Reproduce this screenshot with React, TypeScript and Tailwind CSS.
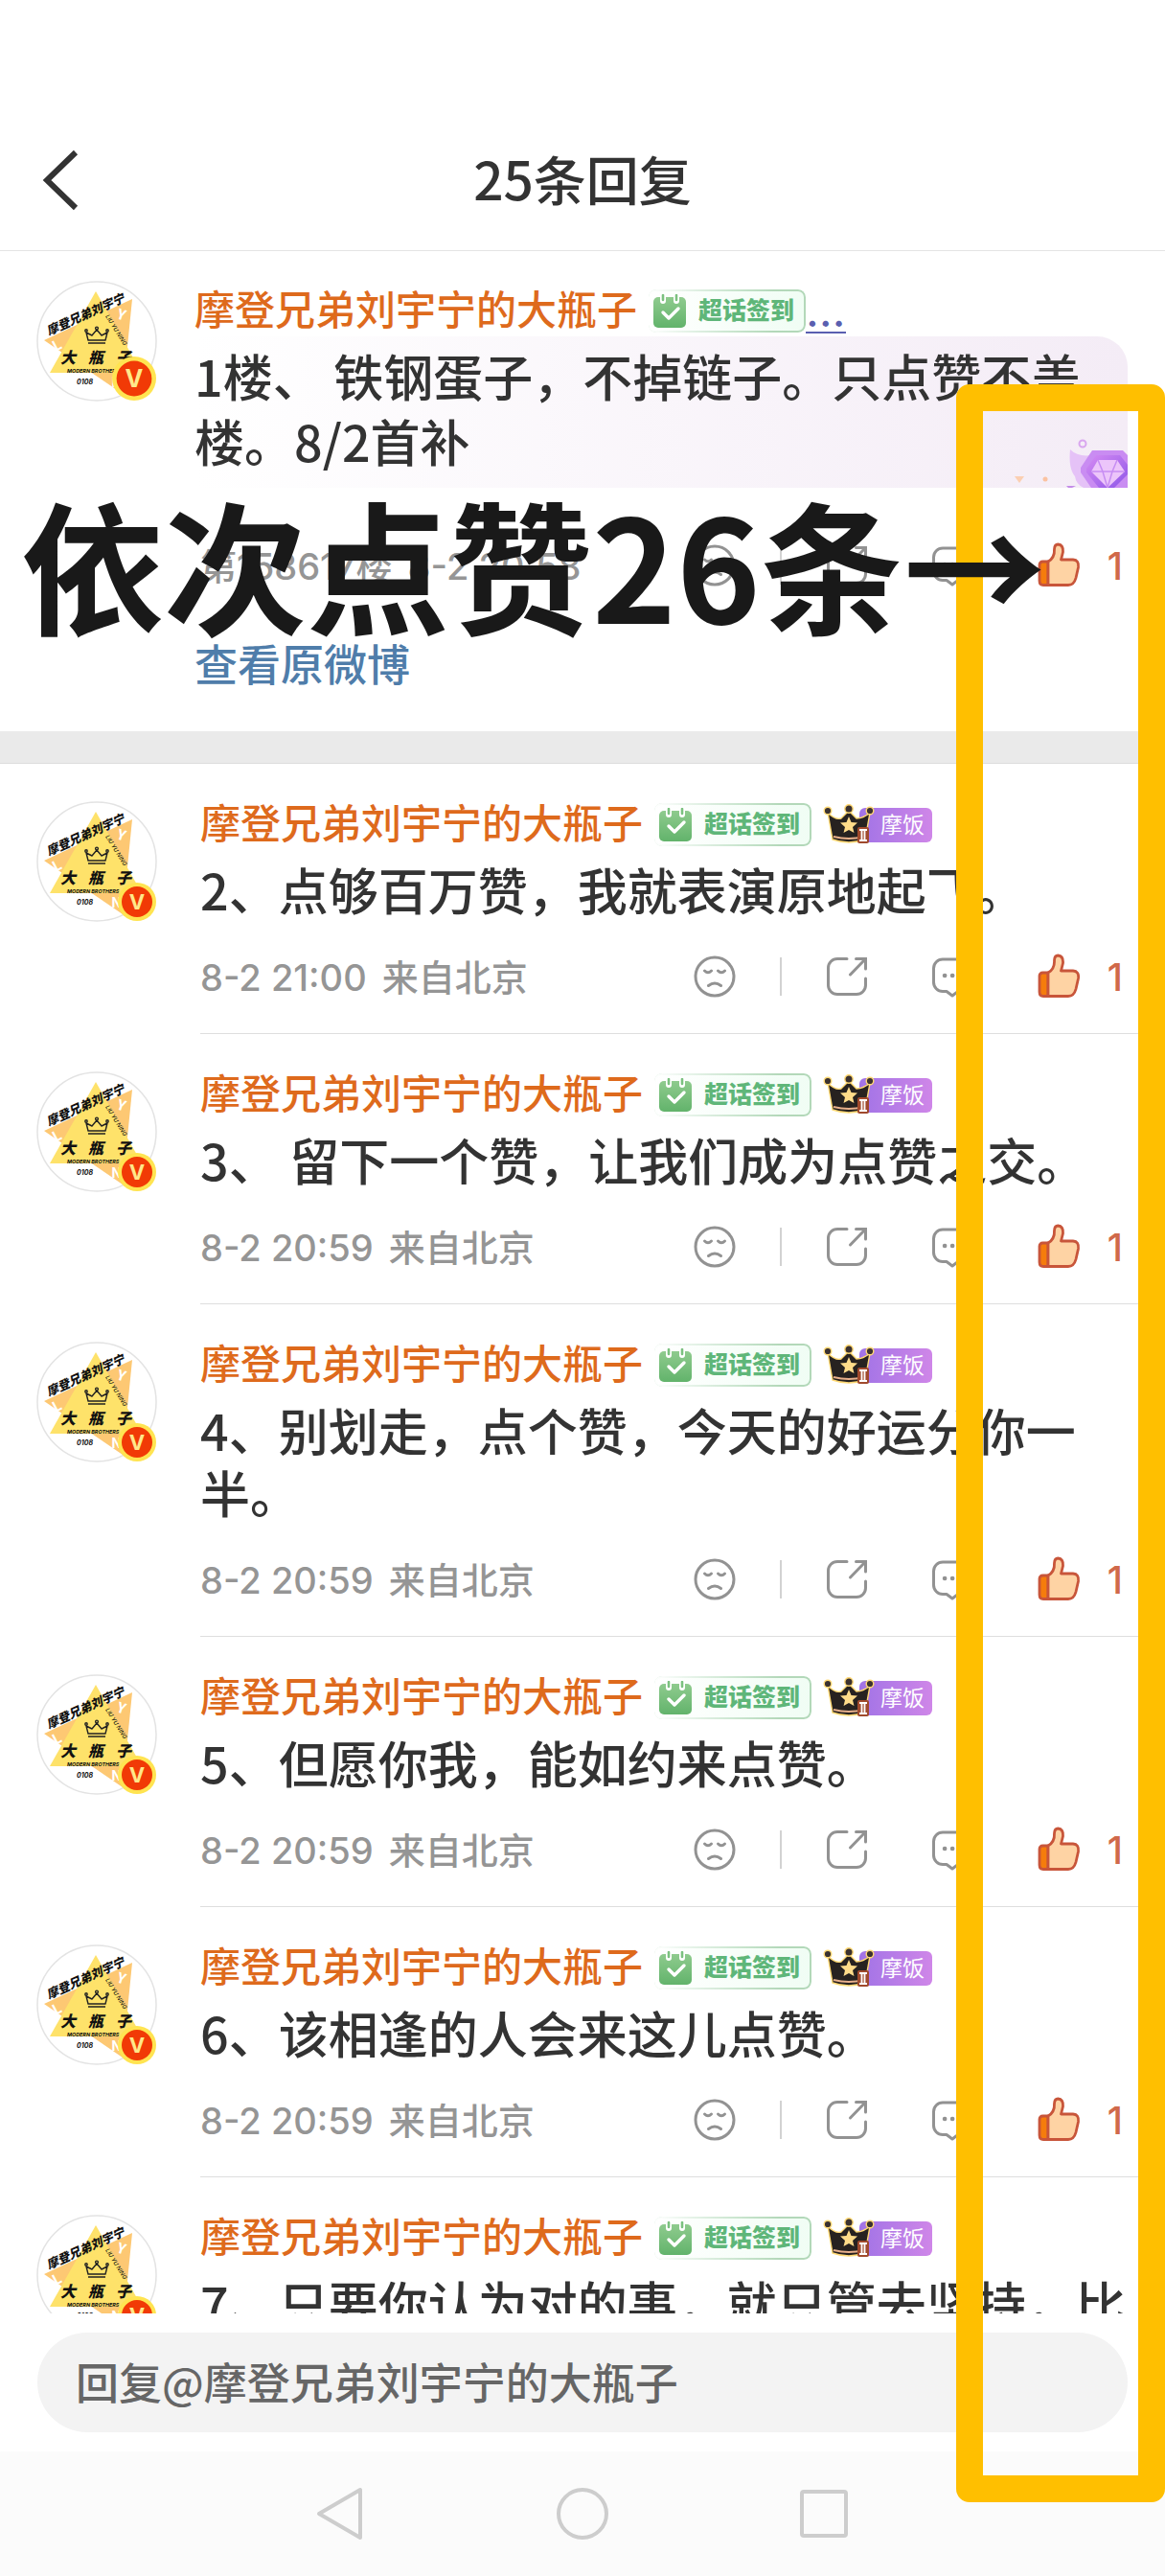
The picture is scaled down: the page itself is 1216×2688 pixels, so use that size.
import React from 'react';

interface Reply {
  id: number;
  text: string;
  time: string;
  location: string;
  likes: number;
}

const USER_NAME = '摩登兄弟刘宇宁的大瓶子';

const replies: Reply[] = [
  { id: 2, text: '2、点够百万赞，我就表演原地起飞。', time: '8-2 21:00', location: '来自北京', likes: 1 },
  { id: 3, text: '3、 留下一个赞，让我们成为点赞之交。', time: '8-2 20:59', location: '来自北京', likes: 1 },
  { id: 4, text: '4、别划走，点个赞，今天的好运分你一半。', time: '8-2 20:59', location: '来自北京', likes: 1 },
  { id: 5, text: '5、但愿你我，能如约来点赞。', time: '8-2 20:59', location: '来自北京', likes: 1 },
  { id: 6, text: '6、该相逢的人会来这儿点赞。', time: '8-2 20:59', location: '来自北京', likes: 1 },
  { id: 7, text: '7、只要你认为对的事，就只管去坚持，比', time: '8-2 20:59', location: '来自北京', likes: 1 },
];

const Avatar = ({ large = false }: { large?: boolean }) => (
  <svg viewBox="0 0 126 126" className="size-[126px] shrink-0 overflow-visible" role="img" aria-label={USER_NAME}>
    <circle cx="63" cy="63" r="62" fill="#fff" stroke="#e3e3e3" strokeWidth="1.5" />
    <path d="M8 62 100 19 90 118Z" fill="#fdc873" />
    <path d="M62 11 110 96H14Z" fill="#fee26a" />
    <g fill="#fff" fontSize="15" fontWeight="700">
      <text transform="translate(20 74) rotate(-28)">L</text>
      <text transform="translate(83 39) rotate(18)">Y</text>
      <text x="78" y="111">N</text>
    </g>
    <g fill="#111" fontWeight="900">
      <text transform="translate(13 57) rotate(-24)" fontSize="12.5" fontStyle="italic">摩登兄弟刘宇宁</text>
      <g fontSize="16" fontStyle="italic">
        <text x="25" y="86">大</text>
        <text x="54" y="86">瓶</text>
        <text x="83" y="86">子</text>
      </g>
      <g fontFamily="Inter, sans-serif" fontStyle="italic" fontWeight="700">
        <text x="32" y="96" fontSize="5.4">MODERN BROTHERS</text>
        <text x="42" y="108" fontSize="7">0108</text>
        <text transform="translate(72 37) rotate(58)" fontSize="6" fontWeight="500">LIU YU NING</text>
      </g>
    </g>
    <g fill="none" stroke="#222" strokeWidth="1.4" strokeLinejoin="round">
      <path d="M54 62 52 54 58 57 63 51 68 57 74 54 72 62ZM54 65H72" />
      <circle cx="52" cy="52" r="1.2" />
      <circle cx="63" cy="49.5" r="1.4" />
      <circle cx="74" cy="52" r="1.2" />
    </g>
    <g transform={large ? 'translate(102 102) scale(1.15)' : 'translate(105 105)'}>
      <circle r="20" fill="#ffe451" />
      <circle r="16" fill="#f13a06" />
      <text y="8" textAnchor="middle" fontSize="22" fontWeight="700" fontFamily="Inter, sans-serif" fill="#ffe88a">V</text>
    </g>
  </svg>
);

const CheckInBadge = () => (
  <span className="relative flex h-[45px] items-center gap-3 rounded-lg bg-linear-to-r from-white to-green-50 pr-3 pl-1">
    <span className="absolute inset-0 rounded-lg border-2 border-[#b3d8b9] mask-l-from-20% mask-l-to-100%" />
    <svg viewBox="0 0 36 36" className="size-9" aria-hidden="true">
      <defs>
        <linearGradient id="cal" x1="0" y1="0" x2="0" y2="1">
          <stop offset="0" stopColor="#8fcb8e" />
          <stop offset="1" stopColor="#62b36b" />
        </linearGradient>
      </defs>
      <rect x="1" y="3" width="34" height="32" rx="5" fill="url(#cal)" />
      <path d="M11 1V7M25 1V7" stroke="#fff" strokeWidth="6" strokeLinecap="round" />
      <path d="M11 1V6M25 1V6" stroke="#7cc180" strokeWidth="2.6" strokeLinecap="round" />
      <path d="M11 19 17 25 27 15" fill="none" stroke="#fff" strokeWidth="3.4" strokeLinecap="round" strokeLinejoin="round" />
    </svg>
    <span className="pb-1 text-[25px] leading-none font-black text-[#5fb679]">超话签到</span>
  </span>
);

const FanBadge = () => (
  <span className="flex h-[45px] items-center">
    <svg viewBox="0 0 54 46" className="z-10 h-[46px] w-[54px] shrink-0" aria-hidden="true">
      <g stroke="#ffd873" strokeWidth="1.4">
        <path d="M5 10 Q13 18 19 16 L27 8 35 16 Q42 16 49 10 L44 38 Q27 44 10 38Z" fill="#272220" />
        <circle cx="5" cy="8" r="3.8" fill="#3b3230" />
        <circle cx="27" cy="6" r="4.2" fill="#3b3230" />
        <circle cx="49" cy="8" r="3.8" fill="#3b3230" />
      </g>
      <path d="M11 35 Q27 39 43 35" fill="none" stroke="#e9b08b" strokeWidth="2" />
      <path d="M27 14 29.500 20 36 20.500 31 25 32.500 31 27 28 21.500 31 23 25 18 20.500 24.500 20Z" fill="#ffdc8a" />
      <rect x="36" y="25" width="12" height="17" rx="2" fill="#a04a2d" />
      <path d="M38 28H46M38 39H46M40.500 28V39M43.500 28V39" stroke="#fff" strokeWidth="1.8" />
    </svg>
    <span className="-ml-4 flex h-9 items-center rounded-md bg-linear-to-r from-[#a173e6] to-[#cf86e8] pr-2 pb-0.5 pl-[22px] text-[23px] leading-none text-white">摩饭</span>
  </span>
);

const SadIcon = () => (
  <svg viewBox="0 0 44 44" className="size-11" fill="none" stroke="#929292" strokeWidth="3" strokeLinecap="round">
    <circle cx="22" cy="22" r="20" />
    <path d="M11.500 16Q15 19.500 18.500 16M25.500 16Q29 19.500 32.500 16M15.500 31.500Q22 26.500 28.500 31.500" />
  </svg>
);

const ShareIcon = () => (
  <svg viewBox="0 0 44 44" className="size-11" fill="none" stroke="#929292" strokeWidth="3" strokeLinecap="round">
    <path d="M22 3.500H12A9.500 9.500 0 0 0 2.500 13V31A9.500 9.500 0 0 0 12 40.500H32A9.500 9.500 0 0 0 41.500 31V24" />
    <path d="M31.500 3.500H41.500V14M41 4 25.500 20" />
  </svg>
);

const CommentIcon = () => (
  <svg viewBox="0 0 44 44" className="size-11" fill="none" stroke="#929292" strokeWidth="3" strokeLinecap="round" strokeLinejoin="round">
    <path d="M12 4H32A9.500 9.500 0 0 1 41.500 13.500V28A9.500 9.500 0 0 1 32 37.500H28L22 42 16 37.500H12A9.500 9.500 0 0 1 2.500 28V13.500A9.500 9.500 0 0 1 12 4Z" />
    <path d="M14 21H14.200M22 21H22.200M30 21H30.200" strokeWidth="4.500" />
  </svg>
);

const LikeIcon = () => (
  <svg viewBox="0 0 46 48" className="h-12 w-[46px]" stroke="#c8553a" strokeWidth="2.800" strokeLinejoin="round">
    <path d="M12 20H6.500Q3 20 3 23.500V40Q3 44.500 7 44.500H12Z" fill="#f57c0c" />
    <path d="M12 20Q19 16 18.500 7 18.800 2 22.300 2 28 2.500 27.500 10L25.500 18H38Q44.500 18.500 43.500 26L41 37Q39 44.500 33 44.500H12Z" fill="#fed3a4" />
  </svg>
);

const Actions = ({ likes }: { likes: number }) => (
  <div className="ml-auto flex shrink-0 items-center">
    <button aria-label="踩"><SadIcon /></button>
    <span className="mx-[46px] h-10 w-0.5 bg-[#d2d2d2]" />
    <button aria-label="转发" className="mr-[66px]"><ShareIcon /></button>
    <button aria-label="评论" className="mr-[66px]"><CommentIcon /></button>
    <button aria-label="点赞" className="flex items-center">
      <LikeIcon />
      <span className="w-11 pt-0.5 text-right font-[Inter] text-[39px] leading-[48px] font-medium text-[#d0694a]">{likes}</span>
    </button>
  </div>
);

const Gem = () => (
  <svg viewBox="0 0 130 52" className="absolute right-0 bottom-0 h-[52px] w-[130px]" aria-hidden="true">
    <defs>
      <linearGradient id="gem" x1="0" y1="0" x2="1" y2="1">
        <stop offset="0" stopColor="#d58bf3" />
        <stop offset="1" stopColor="#8f57e8" />
      </linearGradient>
    </defs>
    <path d="M12 40H22L17 47Z" fill="#fbcfb2" />
    <circle cx="44" cy="43" r="2.500" fill="#fbc3a2" />
    <circle cx="83" cy="6" r="3.500" fill="none" stroke="#d9a6ef" strokeWidth="2" />
    <path d="M70 12Q78 20 92 18V52H84Q76 48 75 40 68 32 70 12Z" fill="#e5c2f7" />
    <path d="M66 50H76L72 52H68Z" fill="#c48ce8" />
    <path d="M93 13H125L130 18V52H92L81 36V31Z" fill="#c98cf2" />
    <path d="M97 18H122L130 28V38L116 52H100L87 36V32Z" fill="url(#gem)" />
    <path d="M99 23H119L127 35 109 52 92 35Z" fill="#ecc5fa" />
    <path d="M99 23 104 35 109 52 114 35 119 23M92 35H127" fill="none" stroke="#c78df3" strokeWidth="1.500" />
  </svg>
);

const Meta = ({ items, likes }: { items: string[]; likes: number }) => (
  <div className="flex h-12 items-center pr-11">
    <p className="flex items-center gap-4 pt-px font-['Inter','Noto_Sans_CJK_SC',sans-serif] text-[38px] leading-[46px] font-medium whitespace-nowrap text-[#959595]">
      {items.map(item => <span key={item}>{item}</span>)}
    </p>
    <Actions likes={likes} />
  </div>
);

const ReplyRow = ({ reply }: { reply: Reply }) => (
  <li className="flex gap-[45px] pl-[38px]">
    <div className="pt-[39px]"><Avatar /></div>
    <div className="min-w-0 flex-1 border-b border-[#dedede] pt-[41px] pb-[35px]">
      <div className="flex h-[45px] items-center gap-3">
        <a href="#user" className="pb-2 text-[42px] leading-[45px] font-medium whitespace-nowrap text-[#de6a1c]">{USER_NAME}</a>
        <CheckInBadge />
        <FanBadge />
      </div>
      <p className="mt-3 mb-[35px] pr-8 text-[52px] leading-[65px] font-medium text-[#333]">{reply.text}</p>
      <Meta items={[reply.time, reply.location]} likes={reply.likes} />
    </div>
  </li>
);

const App: React.FC = () => (
  <div className="relative flex h-screen flex-col overflow-hidden bg-white font-['Noto_Sans_CJK_SC',sans-serif]">
    <header className="relative flex h-[262px] shrink-0 items-center justify-center border-b border-[#e4e4e4] pt-[114px]">
      <button aria-label="返回" className="absolute left-[43px]">
        <svg viewBox="0 0 42 64" className="h-16 w-[42px]" fill="none" stroke="#333" strokeWidth="6">
          <path d="M36 3 6 32 36 61" />
        </svg>
      </button>
      <h1 className="pb-1.5 text-[55px] leading-[68px] font-medium text-[#333]">25条回复</h1>
    </header>

    <main className="min-h-0 flex-1 overflow-hidden">
      <article className="flex gap-[39px] pb-[46px] pl-[38px]">
        <div className="pt-[31px]"><Avatar large /></div>
        <div className="min-w-0 flex-1 pt-10">
          <div className="flex h-[45px] items-center gap-3">
            <a href="#user" className="pb-2 text-[42px] leading-[45px] font-medium whitespace-nowrap text-[#de6a1c]">{USER_NAME}</a>
            <CheckInBadge />
            <a href="#more" className="-ml-3 border-b-2 border-[#5a5fb0] font-[Inter] text-[48px] leading-[44px] text-[#5a5fb0]">…</a>
          </div>
          <div className="relative mt-1 mr-[39px] rounded-tr-[32px] bg-linear-to-r from-white to-[#f4ecf6] pt-[7px] pb-[15px]">
            <Gem />
            <p className="relative text-[52px] leading-[68px] font-medium text-[#333]">1楼、 铁钢蛋子，不掉链子。只点赞不盖楼。8/2首补</p>
          </div>
          <div className="mt-[57px] pl-1.5">
            <Meta items={['第158617楼', '8-2 20:58']} likes={1} />
          </div>
          <a href="#weibo" className="mt-[54px] mb-px block text-[45px] leading-[48px] font-medium text-[#4f7daa]">查看原微博</a>
        </div>
      </article>

      <div className="h-[34px] border-b border-[#dcdcdc] bg-[#eaeaea]" />

      <ul>
        {replies.map(reply => <ReplyRow key={reply.id} reply={reply} />)}
      </ul>
    </main>

    <footer className="shrink-0 px-[39px] py-5">
      <input
        type="text"
        aria-label="回复"
        placeholder={`回复@${USER_NAME}`}
        className="block h-[104px] w-full rounded-full bg-[#f3f3f3] px-10 pb-1 text-[45px] font-medium text-[#333] placeholder:text-[#666]"
      />
    </footer>

    <nav className="flex h-[130px] shrink-0 items-center justify-center gap-[198px] bg-[#fbfbfb]">
      <button aria-label="后退">
        <svg viewBox="0 0 54 58" className="h-[58px] w-[54px]" fill="none" stroke="#cdcdcd" strokeWidth="4" strokeLinejoin="round">
          <path d="M47 4V54L4 29Z" />
        </svg>
      </button>
      <button aria-label="主页">
        <svg viewBox="0 0 54 54" className="size-[54px]" fill="none" stroke="#cdcdcd" strokeWidth="4">
          <circle cx="27" cy="27" r="25" />
        </svg>
      </button>
      <button aria-label="最近任务">
        <svg viewBox="0 0 54 54" className="size-[54px]" fill="none" stroke="#cdcdcd" strokeWidth="4">
          <rect x="4" y="4" width="46" height="46" rx="2" />
        </svg>
      </button>
    </nav>

    <div className="pointer-events-none absolute top-[401px] right-0 bottom-[77px] w-[218px] rounded-[14px] border-[28px] border-[#ffbf00]" />
    <p className="pointer-events-none absolute top-[496px] left-[22px] text-[149px] leading-[180px] font-bold whitespace-nowrap text-[#191919]">依次点赞26条→</p>
  </div>
);

export default App;
